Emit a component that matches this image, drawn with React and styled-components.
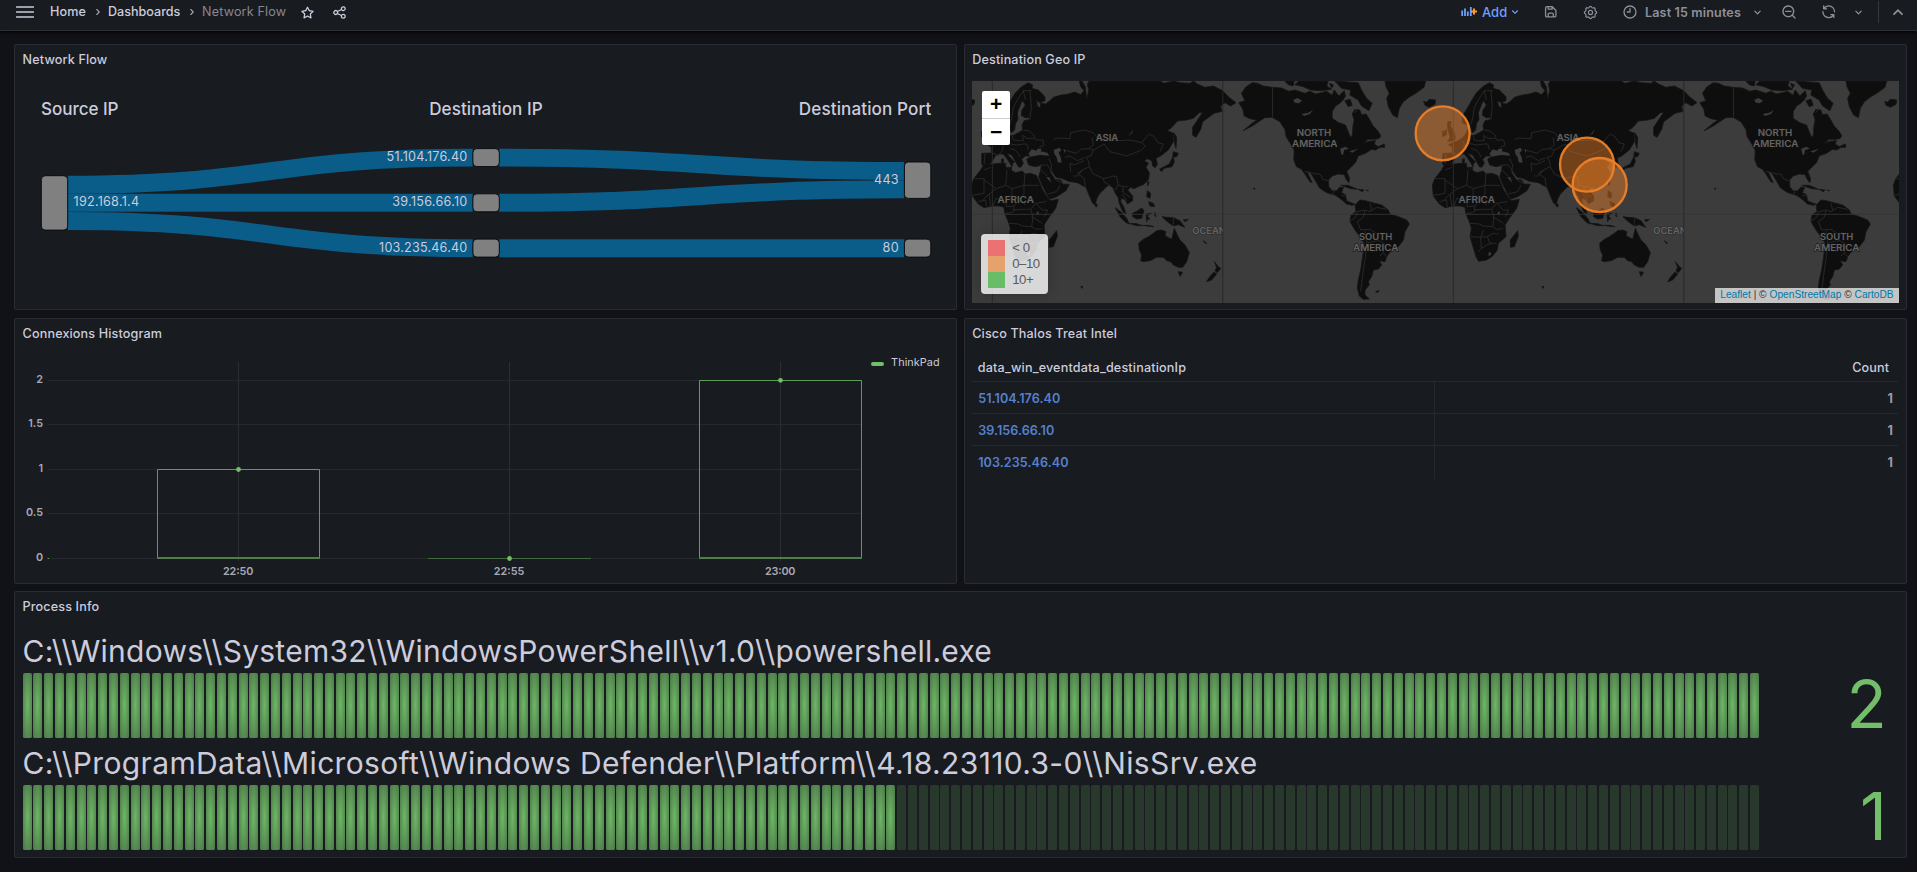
import React from "react";
import styled, { createGlobalStyle } from "styled-components";

const GlobalStyle = createGlobalStyle`
  * { box-sizing: border-box; }
  html, body, #root { height: 100%; }
  body {
    margin: 0;
    overflow: hidden;
    background: #111217;
    color: #ccccdc;
    font-family: Inter, "Liberation Sans", sans-serif;
    font-size: 12.6px;
  }
`;

/* ---------- top bar ---------- */

const TopBar = styled.header`
  position: relative;
  display: flex;
  align-items: center;
  justify-content: space-between;
  height: 31px;
  padding: 0 12px 6px 13px;
  background: #181b1f;
  border-bottom: 1px solid #2d2f35;
  box-shadow: 0 1px 4px #000;
`;

const BarGroup = styled.div`
  display: flex;
  align-items: center;
  height: 24px;
`;

const Slot = styled.span`
  display: flex;
  align-items: center;
  justify-content: center;
  flex: none;
  width: ${(p) => p.$w}px;
  height: 24px;
  color: ${(p) => p.$color || "#8f8f9b"};
`;

const Crumb = styled.span`
  width: ${(p) => p.$w}px;
  line-height: 24px;
  padding-bottom: 1px;
  white-space: nowrap;
  font-weight: ${(p) => (p.$current ? 400 : 500)};
  letter-spacing: ${(p) => p.$ls || 0}px;
  color: ${(p) => (p.$current ? "#868791" : "#ccccdc")};
`;

const AddLabel = styled.span`
  width: 26px;
  padding-bottom: 1px;
  font-weight: 500;
  font-size: 13px;
  color: #6e9fff;
`;

const RangeLabel = styled.span`
  width: 105px;
  font-weight: 600;
  letter-spacing: 0.13px;
  white-space: nowrap;
  color: #8f8f9b;
`;

const Divider = styled.span`
  width: 1px;
  height: 22px;
  background: #36383e;
`;

const Glyph = styled.svg.attrs({ viewBox: "0 0 24 24" })`
  display: block;
  width: ${(p) => p.$size || 14.4}px;
  height: ${(p) => p.$size || 14.4}px;
  fill: currentColor;
`;

const PATHS = {
  star: "M22,9.67A1,1,0,0,0,21.14,9l-5.69-.83L12.9,3a1,1,0,0,0-1.8,0L8.55,8.16,2.86,9a1,1,0,0,0-.81.68,1,1,0,0,0,.25,1l4.13,4-1,5.68A1,1,0,0,0,6.9,21.44L12,18.77l5.1,2.67a.93.93,0,0,0,.46.12,1,1,0,0,0,.59-.19,1,1,0,0,0,.4-1l-1-5.68,4.13-4A1,1,0,0,0,22,9.67Zm-6.15,4a1,1,0,0,0-.29.88l.72,4.2-3.76-2a1.06,1.06,0,0,0-.94,0l-3.76,2,.72-4.2a1,1,0,0,0-.29-.88l-3-3,4.21-.61a1,1,0,0,0,.76-.55L12,5.7l1.88,3.82a1,1,0,0,0,.76.55l4.21.61Z",
  share: "M18,14a4,4,0,0,0-3.08,1.48l-5.1-2.35a3.64,3.64,0,0,0,0-2.26l5.1-2.35A4,4,0,1,0,14,6a4.17,4.17,0,0,0,.07.71L8.79,9.14a4,4,0,1,0,0,5.72l5.28,2.43A4.17,4.17,0,0,0,14,18a4,4,0,1,0,4-4ZM18,4a2,2,0,1,1-2,2A2,2,0,0,1,18,4ZM6,14a2,2,0,1,1,2-2A2,2,0,0,1,6,14Zm12,6a2,2,0,1,1,2-2A2,2,0,0,1,18,20Z",
  save: "M20.71,9.29l-6-6a1,1,0,0,0-.32-.21A1.09,1.09,0,0,0,14,3H6A3,3,0,0,0,3,6V18a3,3,0,0,0,3,3H18a3,3,0,0,0,3-3V10A1,1,0,0,0,20.71,9.29ZM9,5h4V7H9Zm6,14H9V16a1,1,0,0,1,1-1h4a1,1,0,0,1,1,1Zm4-1a1,1,0,0,1-1,1H17V16a3,3,0,0,0-3-3H10a3,3,0,0,0-3,3v3H6a1,1,0,0,1-1-1V6A1,1,0,0,1,6,5H7V8A1,1,0,0,0,8,9h6a1,1,0,0,0,1-1V6.41l4,4Z",
  zoomOut: "M21.71,20.29,18,16.61A9,9,0,1,0,16.61,18l3.68,3.68a1,1,0,0,0,1.42,0A1,1,0,0,0,21.71,20.29ZM11,18a7,7,0,1,1,7-7A7,7,0,0,1,11,18Zm4-8H7a1,1,0,0,0,0,2h8a1,1,0,0,0,0-2Z",
  sync: "M19.91,15.51H15.38a1,1,0,0,0,0,2h2.4A8,8,0,0,1,4,12a1,1,0,1,0-2,0,10,10,0,0,0,16.88,7.23V21a1,1,0,0,0,2,0V16.5A1,1,0,0,0,19.91,15.51ZM12,2A10,10,0,0,0,5.12,4.77V3a1,1,0,0,0-2,0V7.5a1,1,0,0,0,1,1h4.5a1,1,0,0,0,0-2H6.22A8,8,0,0,1,20,12a1,1,0,0,0,2,0A10,10,0,0,0,12,2Z",
  clock: "M12,2A10,10,0,1,0,22,12,10,10,0,0,0,12,2Zm0,18a8,8,0,1,1,8-8A8,8,0,0,1,12,20ZM12,6a1,1,0,0,0-1,1v4H8a1,1,0,0,0,0,2h4a1,1,0,0,0,1-1V7A1,1,0,0,0,12,6Z",
  down: "M17,9.17a1,1,0,0,0-1.41,0L12,12.71,8.46,9.17a1,1,0,0,0-1.41,0,1,1,0,0,0,0,1.42l4.24,4.24a1,1,0,0,0,1.42,0L17,10.59A1,1,0,0,0,17,9.17Z",
  right: "M14.83,11.29,10.59,7.05a1,1,0,0,0-1.42,0,1,1,0,0,0,0,1.41L12.71,12,9.17,15.54a1,1,0,0,0,0,1.41,1,1,0,0,0,.71.29,1,1,0,0,0,.71-.29l4.24-4.24A1,1,0,0,0,14.83,11.29Z",
};

const Icon = ({ name, size }) => (
  <Glyph $size={size}>
    <path d={PATHS[name]} />
  </Glyph>
);

const gearOutline = Array.from({ length: 96 }, (_, i) => {
  const a = (i / 96) * Math.PI * 2;
  const r = 8.9 + 0.95 * Math.cos(8 * a);
  return `${(12 + r * Math.cos(a)).toFixed(2)},${(12 + r * Math.sin(a)).toFixed(2)}`;
}).join(" ");

const GearIcon = () => (
  <Glyph $size={15}>
    <g fill="none" stroke="currentColor" strokeWidth="1.9">
      <polygon points={gearOutline} />
      <circle cx="12" cy="12" r="3.3" />
    </g>
  </Glyph>
);

const MenuIcon = () => (
  <svg width="18" height="12" viewBox="0 0 18 12">
    <path d="M0.5 1H17.5M0.5 6H17.5M0.5 11H17.5" stroke="currentColor" strokeWidth="1.5" strokeLinecap="round" />
  </svg>
);

const PanelAddIcon = () => (
  <svg width="17" height="10" viewBox="0 0 17 10">
    <path d="M1.2 3.5V9M4 1.5V9M6.8 4.5V9M9.8 0V9" stroke="#6e9fff" strokeWidth="1.8" fill="none" />
    <path d="M13 1.5V7.5M10 4.5H16" stroke="#ff9830" strokeWidth="2" />
  </svg>
);

const UpIcon = () => (
  <svg width="12" height="8" viewBox="0 0 12 8">
    <path d="M2 6.2L6 2.2L10 6.2" stroke="currentColor" strokeWidth="1.8" strokeLinecap="round" fill="none" />
  </svg>
);

const Header = () => (
  <TopBar>
    <BarGroup>
      <Slot $w={24} $color="#ccccdc"><MenuIcon /></Slot>
      <Slot $w={13} />
      <Crumb $w={37} $ls={0.1}>Home</Crumb>
      <Slot $w={21} $color="#a0a0ac"><Icon name="right" size={14} /></Slot>
      <Crumb $w={74} $ls={-0.02}>Dashboards</Crumb>
      <Slot $w={20} $color="#a0a0ac"><Icon name="right" size={14} /></Slot>
      <Crumb $w={91} $current $ls={0.17}>Network Flow</Crumb>
      <Slot $w={29} $color="#ccccdc"><Icon name="star" size={15} /></Slot>
      <Slot $w={34} $color="#ccccdc"><Icon name="share" size={15} /></Slot>
    </BarGroup>
    <BarGroup>
      <Slot $w={22}><PanelAddIcon /></Slot>
      <Slot $w={2} />
      <AddLabel>Add</AddLabel>
      <Slot $w={14} $color="#6e9fff"><Icon name="down" size={18} /></Slot>
      <Slot $w={57}><Icon name="save" size={15.5} /></Slot>
      <Slot $w={22}><GearIcon /></Slot>
      <Slot $w={14} />
      <Slot $w={30}><Icon name="clock" size={16} /></Slot>
      <RangeLabel>Last 15 minutes</RangeLabel>
      <Slot $w={15}><Icon name="down" size={15} /></Slot>
      <Slot $w={47}><Icon name="zoomOut" size={16} /></Slot>
      <Slot $w={33}><Icon name="sync" size={15.5} /></Slot>
      <Slot $w={27}><Icon name="down" size={15} /></Slot>
      <Slot $w={6} />
      <Divider />
      <Slot $w={12} />
      <Slot $w={14}><UpIcon /></Slot>
    </BarGroup>
  </TopBar>
);

/* ---------- panels ---------- */

const Board = styled.main`
  display: grid;
  grid-template-columns: 1fr 1fr;
  grid-auto-rows: 266.4px;
  gap: 7.2px;
  padding: 13.1px 10.5px 0 14.4px;
`;

const PanelBox = styled.section`
  grid-column: ${(p) => (p.$wide ? "1 / -1" : "auto")};
  display: flex;
  flex-direction: column;
  min-width: 0;
  background: #181b1f;
  border: 1px solid #2a2c31;
  border-radius: 2px;
`;

const PanelTitle = styled.h2`
  margin: 0;
  height: 28.8px;
  padding-left: 7.2px;
  line-height: 30.4px;
  font-size: 12.6px;
  font-weight: 500;
  letter-spacing: 0.14px;
`;

const PanelBody = styled.div`
  flex: 1;
  min-height: 0;
  padding: 7.2px;
  display: flex;
  flex-direction: ${(p) => (p.$column ? "column" : "row")};
`;

const Panel = ({ title, wide, column, children }) => (
  <PanelBox $wide={wide}>
    <PanelTitle>{title}</PanelTitle>
    <PanelBody $column={column}>{children}</PanelBody>
  </PanelBox>
);

/* ---------- sankey ---------- */

const Chart = styled.svg`
  display: block;
  flex: none;
  overflow: visible;
  font-family: Inter, "Liberation Sans", sans-serif;
  fill: #ccccdc;
`;

const LINKS = [
  [68, 184.7, 472.7, 157.6],
  [68, 202.8, 472.7, 202.8],
  [68, 221, 472.7, 248.2],
  [499.3, 157.6, 904, 171],
  [499.3, 202.8, 904, 189.3],
  [499.3, 248.2, 904, 248.2],
];

const NODES = [
  [41.3, 175.7, 54.4],
  [472.9, 148.6, 18],
  [472.9, 193.8, 18],
  [472.9, 239.1, 18],
  [904.4, 162, 36.4],
  [904.4, 239.1, 18],
];

const NODE_LABELS = [
  [73.5, 206.4, "start", "192.168.1.4", 65.6],
  [467.3, 161.4, "end", "51.104.176.40", 80.7],
  [467.3, 206.4, "end", "39.156.66.10", 75],
  [467.3, 252.3, "end", "103.235.46.40", 88.2],
  [898.6, 184.4, "end", "443", 24.5],
  [898.6, 252.4, "end", "80", 16],
];

const Sankey = () => (
  <Chart width="920" height="222" viewBox="23 81 920 222">
    <g fontSize="17.1" fontWeight="500">
      <text x="41" y="114.8" textLength="77.5">Source IP</text>
      <text x="429.2" y="114.8" textLength="113.5">Destination IP</text>
      <text x="798.8" y="114.8" textLength="132.5">Destination Port</text>
    </g>
    <g fill="none" stroke="#0a5c89" strokeWidth="17.9">
      {LINKS.map(([x0, y0, x1, y1], i) => (
        <path key={i} d={`M${x0},${y0}C${(x0 + x1) / 2},${y0} ${(x0 + x1) / 2},${y1} ${x1},${y1}`} />
      ))}
    </g>
    <g fill="#808080" stroke="#0c0d0f" strokeWidth="1">
      {NODES.map(([x, y, h], i) => (
        <rect key={i} x={x} y={y} width="26.4" height={h} rx="4" />
      ))}
    </g>
    <g fontSize="12.6">
      {NODE_LABELS.map(([x, y, anchor, label, w]) => (
        <text key={label} x={x} y={y} textAnchor={anchor} textLength={w}>{label}</text>
      ))}
    </g>
  </Chart>
);

/* ---------- map ---------- */

const MapFrame = styled.div`
  position: relative;
  flex: none;
  width: 927px;
  height: 222px;
  overflow: hidden;
  background: #3c3c3c;
`;

const MapCanvas = styled.svg`
  display: block;
  font-family: Inter, "Open Sans", sans-serif;
`;

const ZoomControl = styled.div`
  position: absolute;
  left: 10px;
  top: 10px;
  width: 28px;
  height: 54px;
  display: flex;
  flex-direction: column;
  background: #fff;
  border-radius: 2px;
`;

const ZoomButton = styled.button`
  flex: 1;
  padding: 0;
  border: 0;
  border-bottom: ${(p) => (p.$first ? "1px solid #ccc" : "0")};
  background: none;
  color: #000;
  font: bold 21px/24px "Liberation Sans", sans-serif;
`;

const MapLegend = styled.div`
  position: absolute;
  left: 9px;
  bottom: 9px;
  width: 67px;
  height: 60px;
  padding: 6px 7px;
  display: flex;
  flex-direction: column;
  border-radius: 4px;
  background: rgba(255, 255, 255, 0.8);
  box-shadow: 0 0 13px rgba(0, 0, 0, 0.2);
  color: #5a5a5a;
  font: 13.2px/15px "Liberation Sans", Arial, sans-serif;
  letter-spacing: -0.45px;
`;

const LegendEntry = styled.div`
  display: flex;
  gap: 7px;
  height: 16px;
  white-space: nowrap;
`;

const LegendSwatch = styled.i`
  width: 17px;
  height: 16px;
  background: ${(p) => p.$color};
`;

const Attribution = styled.div`
  position: absolute;
  right: 0;
  bottom: 0;
  width: 184px;
  height: 15px;
  padding-left: 5px;
  background: rgba(255, 255, 255, 0.7);
  color: #333;
  font: 10.2px/14px "Liberation Sans", Arial, sans-serif;
  white-space: nowrap;
`;

const AttributionLink = styled.a`
  color: #0078a8;
`;

/* Land outlines; each region has its own x origin, y grows southwards. */
const REGIONS = [
  {
    dx: -97,
    land: [
      "M65,282 65,250 95,249 93,230 82,224 100,216 112,212 125,203 135,190 140,178 147,185 146,197 160,196 175,188 188,180 186,166 192,152 212,148 208,143 195,143 184,136 186,120 196,105 188,92 183,100 172,128 174,148 166,162 164,180 155,188 148,176 148,163 138,165 124,158 124,138 137,118 150,95 165,70 185,50 205,38 218,45 216,55 235,60 255,80 255,92 240,98 230,92 232,108 242,114 240,98 256,102 270,92 280,82 300,76 325,72 345,66 362,74 372,62 362,50 358,33 366,33 376,50 380,88 386,62 382,42 388,33 600,33 612,40 640,33 660,38 690,40 700,33 712,42 735,52 760,48 788,62 805,80 828,98 812,108 795,98 782,108 786,124 762,130 742,145 728,155 722,178 708,202 698,196 698,172 714,148 728,127 718,128 700,145 680,150 652,153 636,172 622,182 640,190 640,215 625,240 603,257 588,265 592,282 586,293 578,288 575,272 562,266 553,272 566,280 558,292 568,308 566,328 552,343 530,352 522,356 512,352 503,360 518,378 518,392 502,402 496,390 484,384 482,395 492,412 498,432 488,425 478,400 474,382 466,370 460,355 448,345 438,352 418,372 411,385 405,404 398,400 385,370 378,352 366,346 352,338 325,334 305,325 288,322 275,303 270,305 285,328 302,330 310,342 328,343 318,362 290,380 268,388 260,372 246,345 236,320 242,300 244,286 225,290 206,285 200,268 215,258 196,258 185,268 190,280 182,292 175,290 165,272 155,255 140,250 150,262 164,276 158,280 156,290 150,280 140,265 130,252 118,252 105,258 98,272 88,286 72,290Z",
      "M80,155 90,155 88,168 97,180 103,200 100,212 80,214 88,202 84,190 80,175Z",
      "M64,185 77,180 76,195 65,200Z",
      "M8,94 16,97 25,88 44,90 42,103 25,112 12,106Z",
      "M143,292 155,292 154,300Z M124,268 130,266 130,282 125,282Z",
      "M641,188 650,202 648,235 644,222Z",
      "M640,245 655,250 650,260 638,262Z",
      "M640,262 643,275 636,290 612,295 605,305 598,298 612,290 628,282 636,265Z",
      "M563,333 567,338 563,348Z M562,362 572,370 570,385 560,380Z M566,395 580,400 584,410 570,408Z",
      "M405,398 412,404 410,411 405,408Z",
      "M466,413 482,425 500,445 508,462 498,458 480,440Z M506,460 530,461 548,467 530,467Z",
      "M517,430 530,424 545,414 552,422 545,445 530,447 518,440Z",
      "M558,432 574,430 562,438 570,448 564,446 560,455Z M585,428 588,440 584,438Z",
      "M606,440 620,442 640,443 660,452 674,472 655,464 640,468 622,455Z M550,466 566,466 582,470 566,469Z",
      "M670,450 685,448 676,455Z M730,512 740,520 736,520Z",
      "M536,520 550,508 565,500 580,490 590,482 605,480 618,485 615,497 635,508 643,475 652,495 660,510 675,525 688,548 680,575 668,592 655,592 640,585 632,575 620,572 610,562 590,562 570,572 550,575 542,572 545,555 538,540Z",
      "M655,605 668,607 660,619Z M763,575 775,590 782,595 772,608 765,602 770,592Z M762,606 770,612 755,630 740,635 748,622Z",
      "M290,482 292,498 280,530 268,532 268,510Z",
      "M362,650 368,649 367,655Z M881,354 885,356 883,359Z",
    ],
    water: [
      "M205,252 215,238 230,242 232,236 245,236 242,244 262,248 268,257 240,255 212,260Z",
      "M281,240 298,233 304,240 296,248 302,262 305,278 293,277 290,262 283,252Z",
      "M504,199 516,190 520,177 512,190Z M310,238 316,240 314,250Z",
      "M258,322 274,338 268,322Z",
    ],
    borders:
      "M280,210 290,204 330,206 332,188 372,180 400,188 412,202 430,208 480,212 505,210 520,212 545,218 560,200 568,192 582,200 594,218 610,222 600,245M396,202 400,225 385,236 362,238 350,250 312,240M386,236 400,240 392,258 378,262 386,275 388,290 368,300 352,318 340,318M400,240 432,222 450,245 500,258 545,240 556,228 545,218M314,262 330,258 352,272 372,264M332,305 330,280 345,284 372,272M388,290 400,312 430,325 448,322 458,318M430,325 432,335 448,345M458,318 470,320 474,345 466,360M474,345 490,350 505,350M490,350 488,366 500,375 512,382M486,372 500,392M266,265 275,285 272,303M240,285 262,285 275,303M242,300 262,318M262,372 290,365 300,345M285,328 312,342M368,300 352,310 372,325 376,350M190,180 205,182 222,195 226,210 248,210 252,225 238,232M188,195 200,205 222,205M157,198 160,210 172,212 190,212 188,197M140,215 152,222 170,225 190,222 200,222 206,240M150,235 165,240 175,250 180,262M124,212 130,222 128,240 118,252M95,249 112,254M75,252 72,282M150,163 156,140 160,112 175,85 190,62 215,62M190,62 196,90M210,143 214,110 210,62M640,440V468",
  },
  {
    dx: -550,
    land: [
      "M525,283 545,283 570,280 590,280 590,290 605,300 620,308 640,303 648,312 665,310 682,316 688,328 700,358 718,386 724,392 748,388 740,415 718,445 705,465 708,500 685,520 682,540 668,558 650,570 626,574 618,560 612,540 600,500 604,475 598,455 587,430 585,412 570,408 550,408 525,413 508,402 490,378 487,345 495,325 515,300Z",
      "M255,405 270,390 285,392 315,400 335,405 355,420 360,432 385,440 410,450 418,462 405,485 400,510 385,530 365,540 350,560 345,575 328,572 335,585 325,597 310,600 305,620 295,635 298,645 285,660 285,675 298,687 280,688 268,678 262,655 265,630 272,600 278,560 283,520 270,500 255,480 240,455 243,435 258,425Z",
      "M345,33 467,33 462,52 440,68 420,80 400,95 388,115 382,143 368,135 355,110 350,85 358,70 348,50Z",
      "M317,664 328,662 322,668Z",
    ],
    water: ["M684,425 690,425 688,434 682,432Z M655,548 662,546 664,554 656,558Z"],
    borders:
      "M525,300 545,292M495,326 525,326 525,370 490,376M525,330 562,356 590,346 594,300M590,346 610,356 645,346 648,310M645,346 690,346M645,346 645,372 632,392 650,405M610,356 608,385 590,392 560,385 552,408M562,356 540,372 520,392M590,392 592,410 615,408 632,392M615,408 612,420 640,418 665,418 680,400 712,395M587,430 608,428 620,418M665,418 672,440 668,470 640,468 628,462 600,460M680,400 700,420 716,420 706,440M668,440 700,460M668,470 680,478 700,476M600,500 632,502 640,480M632,502 634,535 625,545M632,502 652,500 670,490 685,492M652,500 660,520 680,520M634,535 650,525 665,520M540,372 545,408M508,395 530,390M530,390 532,410M240,455 258,440 262,425M262,425 285,420 300,425 320,412 350,418M300,400 305,420M285,420 280,442 262,455 272,480 300,478 322,492 326,512 345,522 340,548 330,558M285,482 290,520 305,515 326,512M290,520 286,560 280,600 275,640 272,665M340,548 350,560",
  },
  {
    dx: -975.5,
    land: [
      "M340,70 352,52 372,38 388,40 405,48 432,52 460,54 482,64 500,60 530,70 545,64 562,72 580,68 595,64 612,76 618,60 632,78 648,62 652,78 645,90 635,100 622,108 612,125 612,145 632,158 652,165 660,185 667,202 673,195 674,170 678,150 672,132 680,118 695,120 700,134 714,132 722,145 735,168 750,184 758,198 752,206 738,208 720,208 705,220 722,214 742,212 738,222 750,230 768,222 770,232 756,232 742,240 730,238 712,250 690,258 682,278 668,292 656,304 664,326 662,338 654,328 648,314 630,312 612,318 601,330 602,350 612,363 626,362 634,352 646,352 640,368 652,374 655,392 668,398 680,402 672,406 655,402 642,390 622,376 596,368 574,354 564,336 548,310 536,304 552,338 545,335 530,312 520,298 505,290 497,270 498,240 488,222 474,200 470,178 455,155 432,142 410,143 396,152 372,168 345,182 372,160 386,150 365,146 348,138 344,118 332,98 350,92Z",
      "M512,33 600,33 596,48 610,58 580,62 548,60 525,50 500,44Z M470,33 498,33 495,48 480,44Z",
      "M620,33 690,38 700,60 715,85 732,100 722,122 700,108 690,90 665,75 668,60 640,55Z M604,40 616,45 610,55Z",
      "M650,92 666,88 672,106 660,110Z",
      "M638,346 660,346 688,358 668,356Z M690,358 708,360 702,365Z M714,361 720,361 720,363Z",
    ],
    water: [
      "M495,90 508,84 522,92 512,100 500,98Z M520,132 540,128 555,120 545,132 528,138Z",
      "M636,236 652,230 662,236 648,240 645,254 640,254Z M664,244 690,236 672,248Z",
    ],
    borders: "M433,52 433,140M530,304 548,308 562,312 575,312 585,328 600,332M612,376 618,364M640,378 652,376M680,128 690,112",
  },
];

const PLACE_LABELS = [
  [344, 214, "ASIA", 68],
  [70, 399, "AFRICA", 109],
  [-418, 199, "NORTH", 104],
  [-416, 232, "AMERICA", 136],
  [-233, 509, "SOUTH", 100],
  [-233, 542, "AMERICA", 136],
];

const MAP_WIDTH = 2781;
const WORLD_ORIGINS = [61, 1444, 2827];
const onMap = (x) => x > 0 && x < MAP_WIDTH;

const World = ({ origin }) => (
  <g>
    {REGIONS.map((r) => (
      <g key={r.dx} transform={`translate(${r.dx} 0)`}>
        <path d={r.land.join("")} fill="#0e0e0e" stroke="#161616" strokeWidth="2.5" strokeLinejoin="round" />
        <path d={r.borders} fill="none" stroke="#2f2f2f" strokeWidth="2.4" strokeLinejoin="round" />
        <path d={r.water.join("")} fill="#3c3c3c" />
      </g>
    ))}
    <path d="M0,33V700M691.5,33V700" stroke="#292929" strokeWidth="3" />
    <path d="M-691.5,433H691.5" stroke="#363636" strokeWidth="2.5" />
    <g
      fontSize="26.5"
      fontWeight="600"
      fill="#636363"
      stroke="#141414"
      strokeOpacity="0.75"
      strokeWidth="4"
      paintOrder="stroke"
    >
      {PLACE_LABELS.filter(([x]) => onMap(origin + x)).map(([x, y, t, w]) => (
        <text key={t + y} x={x} y={y} textAnchor="middle" textLength={w} lengthAdjust="spacingAndGlyphs">{t}</text>
      ))}
      {onMap(origin + 600) && (
        <text
          x="600"
          y="492"
          textLength="100"
          lengthAdjust="spacingAndGlyphs"
          clipPath="url(#tileEdge)"
          strokeOpacity="0.3"
        >
          OCEAN
        </text>
      )}
    </g>
  </g>
);

const HITS = [
  [1412, 157],
  [1845, 251],
  [1883, 312],
];

const GeoMap = () => (
  <MapFrame>
    <MapCanvas width="927" height="222" viewBox={`0 0 ${MAP_WIDTH} 666`}>
      <defs>
        <clipPath id="tileEdge">
          <rect x="560" y="460" width="131" height="50" />
        </clipPath>
      </defs>
      {WORLD_ORIGINS.map((x) => (
        <g key={x} transform={`translate(${x} -33)`}>
          <World origin={x} />
        </g>
      ))}
      {HITS.map(([cx, cy]) => (
        <circle
          key={cx}
          cx={cx}
          cy={cy}
          r="81"
          fill="#ed8128"
          fillOpacity="0.45"
          stroke="#ed8128"
          strokeOpacity="0.95"
          strokeWidth="7"
        />
      ))}
    </MapCanvas>
    <ZoomControl>
      <ZoomButton $first>+</ZoomButton>
      <ZoomButton>−</ZoomButton>
    </ZoomControl>
    <MapLegend>
      <LegendEntry><LegendSwatch $color="#eb7172" />&lt; 0</LegendEntry>
      <LegendEntry><LegendSwatch $color="#e5a26d" />0–10</LegendEntry>
      <LegendEntry><LegendSwatch $color="#69bc68" />10+</LegendEntry>
    </MapLegend>
    <Attribution>
      <AttributionLink>Leaflet</AttributionLink> | © <AttributionLink>OpenStreetMap</AttributionLink> ©{" "}
      <AttributionLink>CartoDB</AttributionLink>
    </Attribution>
  </MapFrame>
);

/* ---------- histogram ---------- */

const SeriesKey = styled.div`
  display: flex;
  align-items: center;
  gap: 7.5px;
  height: 16px;
  margin-left: 6px;
  font-size: 10.8px;
  letter-spacing: 0.1px;
`;

const SeriesMark = styled.i`
  width: 13px;
  height: 4px;
  margin-top: 2px;
  border-radius: 2px;
  background: #73bf69;
`;

const Y_TICKS = [
  [380.5, "2"],
  [424.5, "1.5"],
  [469.5, "1"],
  [513.5, "0.5"],
  [558.5, "0"],
];
const X_TICKS = [
  [238.5, "22:50"],
  [509.3, "22:55"],
  [780.5, "23:00"],
];

const Histogram = () => (
  <Chart width="842" height="222" viewBox="23 355 842 222">
    <g stroke="#25282c">
      {Y_TICKS.map(([y]) => <path key={y} d={`M48,${y}H862`} />)}
      {X_TICKS.map(([x]) => <path key={x} d={`M${Math.floor(x) + 0.5},362V561`} stroke="#2a2d31" />)}
    </g>
    <g fontSize="10.8" fontWeight="600" fill="#a9a9b6">
      {Y_TICKS.map(([y, t]) => <text key={t} x="43" y={y + 2.6} textAnchor="end">{t}</text>)}
      {X_TICKS.map(([x, t]) => (
        <text key={t} x={x - 0.3} y="574.6" textAnchor="middle" textLength="30.5">{t}</text>
      ))}
    </g>
    <g fill="none" stroke="#5f9c57">
      <path d="M47.5,558.5H49" />
      <path d="M157.5,557V469.5H319.5V557" />
      <path d="M699.5,557V380.5H861.5V557" />
      <path d="M157,558H320M699,558H862" stroke="#4f7f49" strokeWidth="2" />
      <path d="M428,558.5H591" stroke="#42693f" />
    </g>
    <g fill="#73bf69">
      <circle cx="238.5" cy="469.5" r="2.4" />
      <circle cx="509.5" cy="558.5" r="2.4" />
      <circle cx="780.5" cy="380.3" r="2.4" />
    </g>
  </Chart>
);

/* ---------- table ---------- */

const Table = styled.div`
  flex: 1;
  margin-top: -5.4px;
`;

const TableRow = styled.div`
  display: grid;
  grid-template-columns: 1fr 1fr;
  height: ${(p) => (p.$last ? 31 : 32.4)}px;
  border-bottom: ${(p) => (p.$last ? 0 : 1)}px solid #26282d;
`;

const HeadCell = styled.div`
  padding: ${(p) => (p.$num ? "0 9px" : "0 5.6px")};
  line-height: 37px;
  font-weight: 500;
  letter-spacing: 0.17px;
  text-align: ${(p) => (p.$num ? "right" : "left")};
`;

const Cell = styled.div`
  padding: 0 5.4px 0 6px;
  line-height: 33px;
  font-weight: ${(p) => (p.$num ? 700 : 600)};
  letter-spacing: 0.05px;
  color: ${(p) => (p.$num ? "#9a9ba6" : "#5580cf")};
  text-align: ${(p) => (p.$num ? "right" : "left")};
  border-right: ${(p) => (p.$num ? 0 : 1)}px solid #26282d;
`;

const IPS = ["51.104.176.40", "39.156.66.10", "103.235.46.40"];

const IntelTable = () => (
  <Table>
    <TableRow>
      <HeadCell>data_win_eventdata_destinationIp</HeadCell>
      <HeadCell $num>Count</HeadCell>
    </TableRow>
    {IPS.map((ip, i) => (
      <TableRow key={ip} $last={i === IPS.length - 1}>
        <Cell>{ip}</Cell>
        <Cell $num>1</Cell>
      </TableRow>
    ))}
  </Table>
);

/* ---------- bar gauges ---------- */

const Gauge = styled.div`
  flex: none;
  height: 112px;
`;

const GaugeName = styled.div`
  height: 44.8px;
  line-height: 47.5px;
  font-size: 30px;
  white-space: nowrap;
  letter-spacing: ${(p) => p.$ls}px;
`;

const GaugeRow = styled.div`
  display: flex;
  justify-content: space-between;
  height: 65px;
`;

const Cells = styled.div`
  display: flex;
  gap: 1.8px;
`;

const LedCell = styled.i`
  flex: none;
  width: 9px;
  height: 65px;
  border-radius: 1.5px;
  background: ${(p) =>
    p.$lit
      ? "radial-gradient(rgba(115,191,105,.95), rgba(115,191,105,.55))"
      : "rgba(115,191,105,.18)"};
`;

const GaugeValue = styled.div`
  margin-right: 11.5px;
  line-height: 62px;
  font-size: 66px;
  color: #73bf69;
`;

const PROCESSES = [
  {
    name: "C:\\\\Windows\\\\System32\\\\WindowsPowerShell\\\\v1.0\\\\powershell.exe",
    value: 2,
    lit: 161,
    spacing: 0.26,
  },
  {
    name: "C:\\\\ProgramData\\\\Microsoft\\\\Windows Defender\\\\Platform\\\\4.18.23110.3-0\\\\NisSrv.exe",
    value: 1,
    lit: 81,
    spacing: 0.35,
  },
];

const BarGauge = ({ name, value, lit, spacing }) => (
  <Gauge>
    <GaugeName $ls={spacing}>{name}</GaugeName>
    <GaugeRow>
      <Cells>
        {Array.from({ length: 161 }, (_, i) => <LedCell key={i} $lit={i < lit} />)}
      </Cells>
      <GaugeValue>{value}</GaugeValue>
    </GaugeRow>
  </Gauge>
);

export default function App() {
  return (
    <>
      <GlobalStyle />
      <Header />
      <Board>
        <Panel title="Network Flow"><Sankey /></Panel>
        <Panel title="Destination Geo IP"><GeoMap /></Panel>
        <Panel title="Connexions Histogram">
          <Histogram />
          <SeriesKey><SeriesMark />ThinkPad</SeriesKey>
        </Panel>
        <Panel title="Cisco Thalos Treat Intel"><IntelTable /></Panel>
        <Panel title="Process Info" wide column>
          {PROCESSES.map((p) => <BarGauge key={p.name} {...p} />)}
        </Panel>
      </Board>
    </>
  );
}
